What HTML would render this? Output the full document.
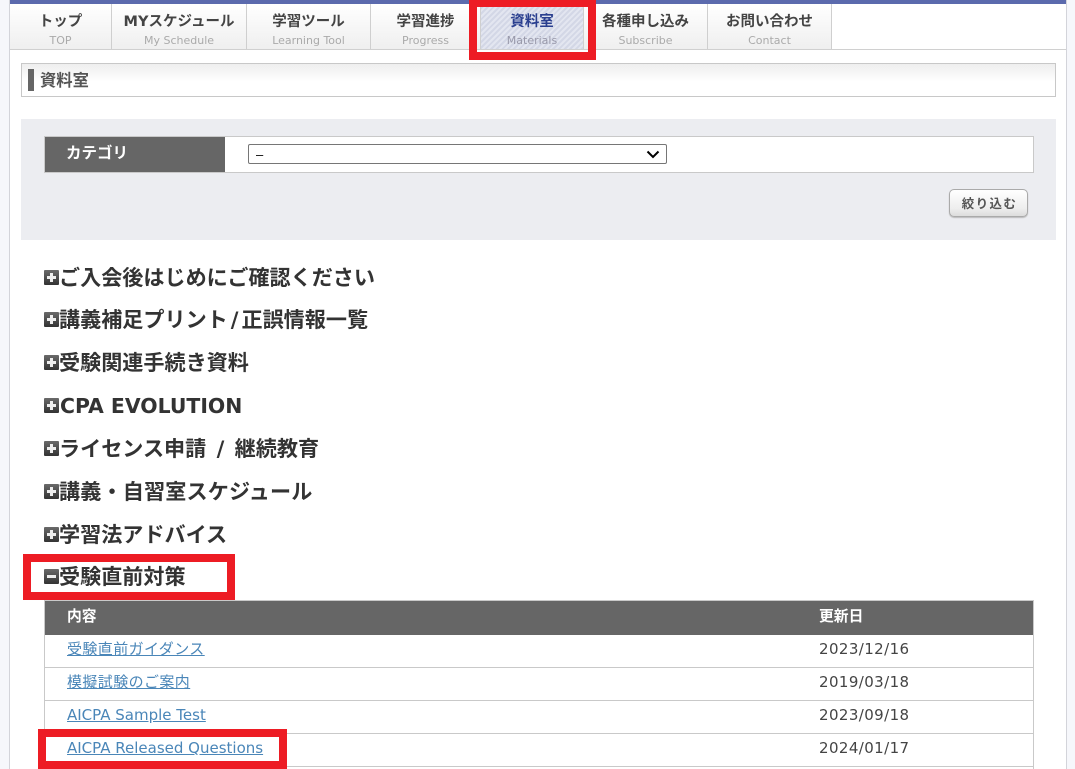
<!DOCTYPE html>
<html lang="ja"><head><meta charset="utf-8"><title>資料室</title>
<style>
html,body{margin:0;padding:0;width:1075px;height:769px;overflow:hidden;background:#f6f7fb;}
body{position:relative;font-family:"DejaVu Sans","Noto Sans CJK JP",sans-serif;color:#333;}
div,a,span{position:absolute;white-space:nowrap;box-sizing:border-box;}
em{font-style:normal;padding:0 3px;}
#page{left:9px;top:0;width:1058px;height:769px;background:#fff;border-left:1px solid #d3d4da;border-right:1px solid #d3d4da;}
#top{left:10px;top:0;width:1056px;height:4px;background:#5b6aad;}
#nav{left:10px;top:4px;width:1056px;height:46px;background:#fff;border-bottom:1px solid #d0d0d0;}
.tab{top:4px;height:45px;background:linear-gradient(#fff,#efefef);border-right:1px solid #cfcfcf;text-align:center;}
.tab b{position:absolute;left:0;right:0;top:8px;font:bold 14.5px/20px "DejaVu Sans","Noto Sans CJK JP",sans-serif;color:#444;}
.tab i{position:absolute;left:0;right:0;top:30px;font:normal 11px/14px "DejaVu Sans","Noto Sans CJK JP",sans-serif;color:#aaa;}
.on{background:repeating-linear-gradient(135deg,#e3e6f0 0 2px,#d3d7e6 2px 4px);}
.on b{color:#2a3f8f}.on i{color:#99a}
.red{border:solid #ed1c24;}
#title{left:21px;top:63px;width:1035px;height:34px;background:linear-gradient(#eee,#fff 55%);border:1px solid #c8c8c8;}
#bar{left:28px;top:69px;width:6px;height:22px;background:#666;}
#ttl{left:40px;top:68px;font:bold 16.3px/22px "Noto Sans CJK JP",sans-serif;color:#555;}
#panel{left:21px;top:119px;width:1035px;height:121px;background:#ecedf1;}
#ftable{left:44px;top:136px;width:990px;height:37px;background:#fff;border:1px solid #c9c9c9;}
#fth{left:45px;top:137px;width:180px;height:35px;background:#666;color:#fff;font:bold 15.5px/31px "Noto Sans CJK JP",sans-serif;padding-left:21px;}
#sel{left:248px;top:144px;width:419px;height:20px;background:#fff;border:1px solid #767676;border-radius:2px;font:13px/20px "Liberation Sans",sans-serif;color:#000;padding-left:7px;}
#btn{left:949px;top:189px;width:79px;height:28px;border:1px solid #aaa;border-radius:5px;background:linear-gradient(#fff,#eee 70%,#ddd);box-shadow:0 1px 1px #bbb;text-align:center;font:bold 12.5px/25px "Noto Sans CJK JP",sans-serif;color:#555;letter-spacing:1.4px;padding-left:2px;}
.h{left:59px;font:bold 21.1px/30px "DejaVu Sans","Noto Sans CJK JP",sans-serif;color:#333;}
.ic{left:44px;width:15px;height:15px;background:linear-gradient(#6a6a6a,#333);border-radius:1px;}
.ic:before{content:"";position:absolute;left:3px;top:6px;width:9px;height:3px;background:#eee;}
.ic.p:after{content:"";position:absolute;left:6px;top:3px;width:3px;height:9px;background:#eee;}
#tbl{left:44px;top:600px;width:990px;height:170px;background:#fff;border:1px solid #c9c9c9;border-bottom:0;}
#thd{left:45px;top:601px;width:988px;height:34px;background:#666;}
.th{top:606px;font:bold 14.8px/20px "Noto Sans CJK JP",sans-serif;color:#fff;}
.ln{left:45px;width:988px;height:1px;background:#c9c9c9;}
.l{left:67px;font:15px/20px "DejaVu Sans","Noto Sans CJK JP",sans-serif;color:#4a86b8;text-decoration:underline;}
.d{left:819px;font:15px/20px "DejaVu Sans",sans-serif;color:#444;letter-spacing:.4px;}
</style></head><body>
<div id="page"></div><div id="top"></div><div id="nav"></div>
<div class="tab" style="left:10px;width:102px"><b>トップ</b><i>TOP</i></div>
<div class="tab" style="left:112px;width:135px"><b>MYスケジュール</b><i>My Schedule</i></div>
<div class="tab" style="left:247px;width:124px"><b>学習ツール</b><i>Learning Tool</i></div>
<div class="tab" style="left:371px;width:110px"><b>学習進捗</b><i>Progress</i></div>
<div class="tab on" style="left:481px;width:103px"><b>資料室</b><i>Materials</i></div>
<div class="tab" style="left:584px;width:124px"><b>各種申し込み</b><i>Subscribe</i></div>
<div class="tab" style="left:708px;width:124px"><b>お問い合わせ</b><i>Contact</i></div>
<div class="red" style="left:469px;top:0;width:127px;height:60px;border-width:7px 8px 8px 8px"></div>
<div id="title"></div><div id="bar"></div><div id="ttl">資料室</div>
<div id="panel"></div><div id="ftable"></div><div id="fth">カテゴリ</div>
<div id="sel">–<svg style="position:absolute;right:6px;top:5px" width="14" height="9" viewBox="0 0 14 9"><path d="M1.5 1.5 7 7l5.5-5.5" fill="none" stroke="#000" stroke-width="2"/></svg></div>
<div id="btn">絞り込む</div>

<div class="ic p" style="top:270px"></div><div class="h" style="top:263px">ご入会後はじめにご確認ください</div>
<div class="ic p" style="top:312px"></div><div class="h" style="top:305px">講義補足プリント<em>/</em>正誤情報一覧</div>
<div class="ic p" style="top:355px"></div><div class="h" style="top:348px">受験関連手続き資料</div>
<div class="ic p" style="top:398px"></div><div class="h" style="top:391px;left:60px;font-size:20.4px">CPA EVOLUTION</div>
<div class="ic p" style="top:441px"></div><div class="h" style="top:434px">ライセンス申請 <em>/</em> 継続教育</div>
<div class="ic p" style="top:484px"></div><div class="h" style="top:477px;letter-spacing:.15px">講義・自習室スケジュール</div>
<div class="ic p" style="top:527px"></div><div class="h" style="top:520px">学習法アドバイス</div>
<div class="ic" style="top:569px"></div><div class="h" style="top:562px">受験直前対策</div>
<div class="red" style="left:23px;top:554px;width:212px;height:46px;border-width:8px"></div>

<div id="tbl"></div><div id="thd"></div>
<div class="th" style="left:67px">内容</div><div class="th" style="left:819px">更新日</div>
<a class="l" style="top:639px;letter-spacing:.4px">受験直前ガイダンス</a><div class="d" style="top:639px">2023/12/16</div><div class="ln" style="top:667px"></div>
<a class="l" style="top:672px;letter-spacing:.4px">模擬試験のご案内</a><div class="d" style="top:672px">2019/03/18</div><div class="ln" style="top:700px"></div>
<a class="l" style="top:705px">AICPA Sample Test</a><div class="d" style="top:705px">2023/09/18</div><div class="ln" style="top:733px"></div>
<a class="l" style="top:738px">AICPA Released Questions</a><div class="d" style="top:738px">2024/01/17</div><div class="ln" style="top:766px"></div>
<div class="red" style="left:38px;top:729px;width:249px;height:40px;border-width:8px"></div>
</body></html>
